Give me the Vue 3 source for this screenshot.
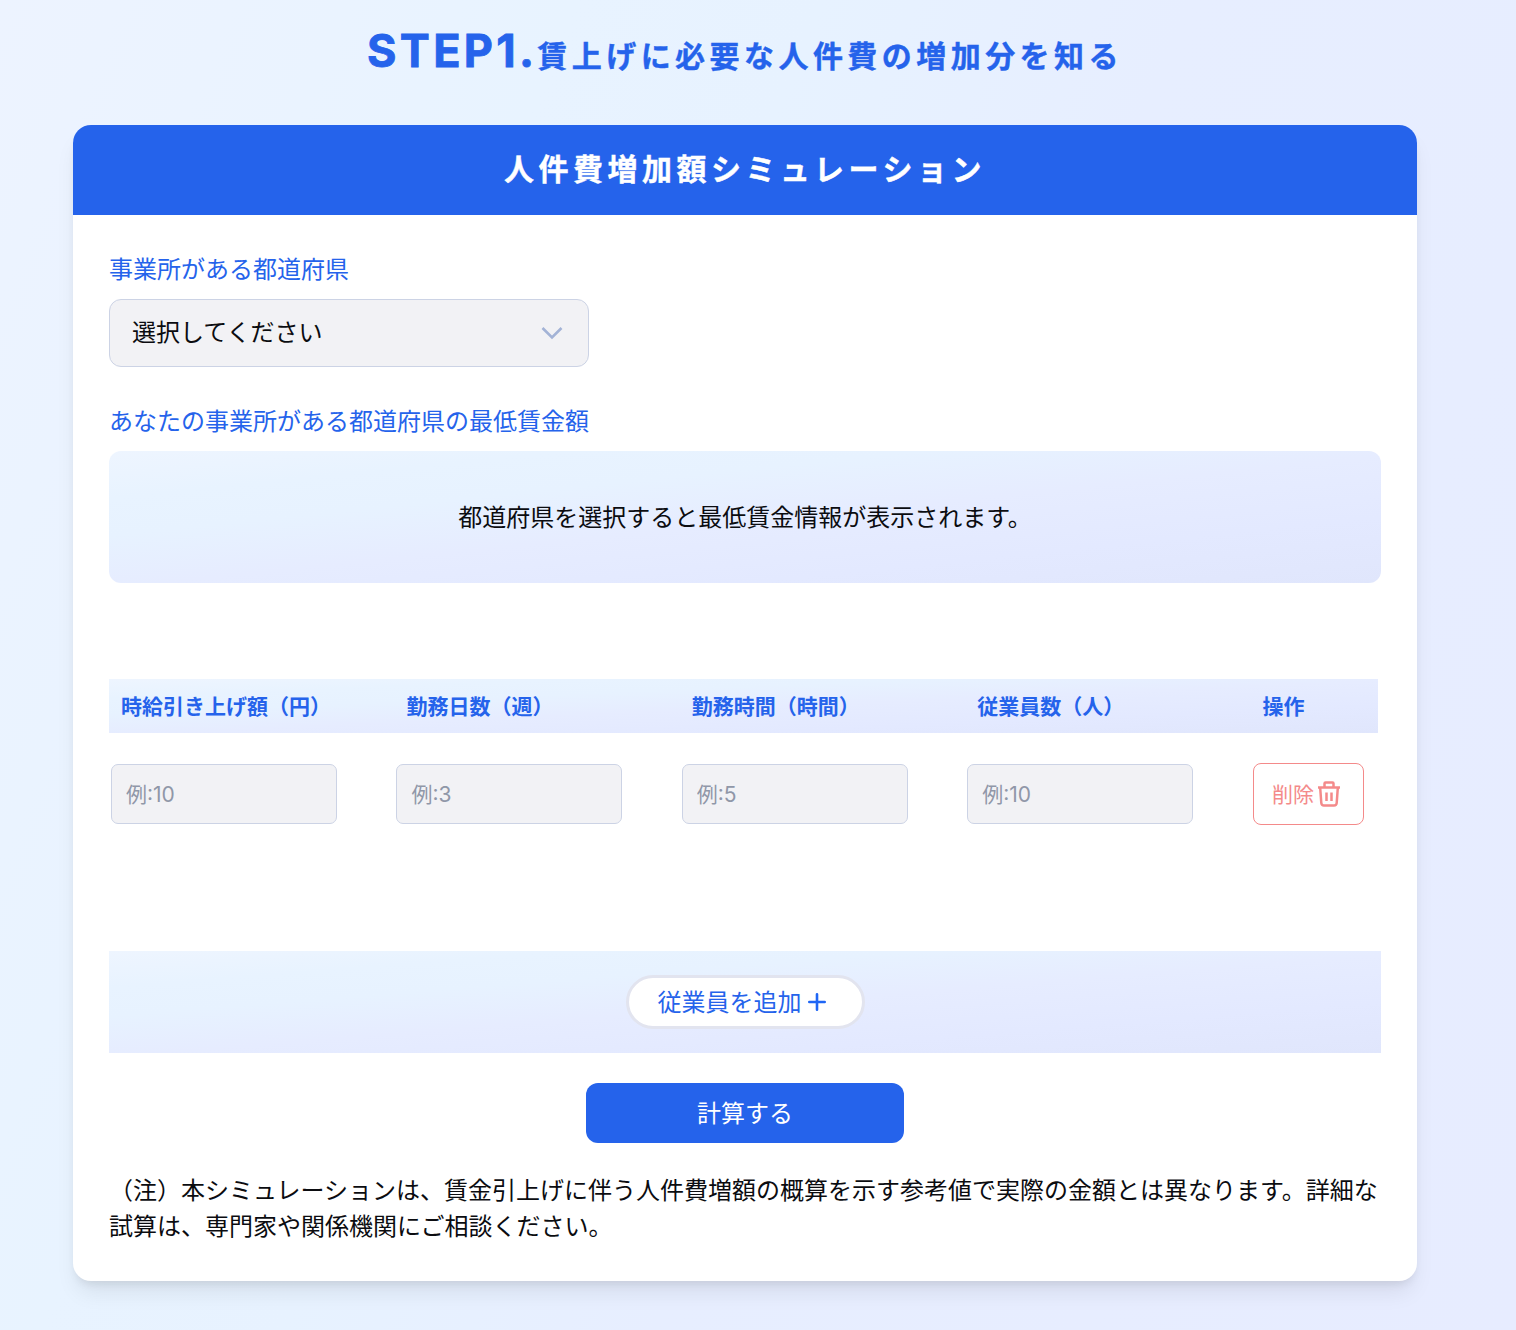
<script setup>
import { ref } from "vue";

const prefecture = ref("");

// 従業員入力の列
const columns = [
  { key: "raise", label: "時給引き上げ額（円）", placeholder: "例:10" },
  { key: "days", label: "勤務日数（週）", placeholder: "例:3" },
  { key: "hours", label: "勤務時間（時間）", placeholder: "例:5" },
  { key: "members", label: "従業員数（人）", placeholder: "例:10" },
];

let nextId = 1;
const newRow = () => ({ id: nextId++, raise: "", days: "", hours: "", members: "" });
const rows = ref([newRow()]);

const addRow = () => {
  rows.value.push(newRow());
};

const removeRow = (id) => {
  if (rows.value.length > 1) {
    rows.value = rows.value.filter((row) => row.id !== id);
  }
};
</script>

<template>
  <main class="page">
    <h1 class="title"><span class="step">STEP1.</span>賃上げに必要な人件費の増加分を知る</h1>

    <section class="card">
      <h2 class="cardHeader">人件費増加額シミュレーション</h2>

      <div class="cardBody">
        <p class="label">事業所がある都道府県</p>
        <div class="selectBox">
          <span>{{ prefecture || "選択してください" }}</span>
          <svg width="24" height="24" viewBox="0 0 24 24" fill="none" stroke="#a3b3d6" stroke-width="2.6">
            <path d="M2.5 7 L12 16.5 L21.5 7" />
          </svg>
        </div>

        <p class="label wageLabel">あなたの事業所がある都道府県の最低賃金額</p>
        <div class="wageBox">都道府県を選択すると最低賃金情報が表示されます。</div>

        <div class="table">
          <div class="row tableHead">
            <span v-for="col in columns" :key="col.key">{{ col.label }}</span>
            <span>操作</span>
          </div>
          <div v-for="row in rows" :key="row.id" class="row tableRow">
            <div v-for="col in columns" :key="col.key">
              <input v-model="row[col.key]" type="text" class="textBox" :placeholder="col.placeholder">
            </div>
            <button class="deleteBtn" @click="removeRow(row.id)">
              <span>削除</span>
              <svg width="24" height="26" viewBox="0 0 24 26" fill="none" stroke="#f48a8a" stroke-width="2.5" stroke-linejoin="round">
                <path d="M1 6.5 H23" />
                <path d="M7.5 6 V2.5 Q7.5 1.5 8.5 1.5 H15.5 Q16.5 1.5 16.5 2.5 V6" />
                <path d="M3.2 7 L4.3 22 Q4.5 24.5 7 24.5 H17 Q19.5 24.5 19.7 22 L20.8 7" />
                <path d="M9.5 11.5 V20 M14.5 11.5 V20" />
              </svg>
            </button>
          </div>
        </div>

        <div class="addArea">
          <button class="addBtn" @click="addRow">
            <span>従業員を追加</span>
            <svg width="18" height="18" viewBox="0 0 18 18" stroke="#1f66f5" stroke-width="2.6" stroke-linecap="round">
              <path d="M1.3 9 H16.7 M9 1.3 V16.7" />
            </svg>
          </button>
        </div>

        <button class="calcBtn">計算する</button>

        <p class="note">（注）本シミュレーションは、賃金引上げに伴う人件費増額の概算を示す参考値で実際の金額とは異なります。詳細な試算は、専門家や関係機関にご相談ください。</p>
      </div>
    </section>
  </main>
</template>

<style>
body {
  margin: 0;
}
</style>

<style scoped>
* {
  box-sizing: border-box;
}

.page {
  height: 1330px;
  padding: 20px 99px 0 73px;
  overflow: hidden;
  background: linear-gradient(112deg, #edf3ff 0%, #e8f3ff 28%, #e7f2ff 40%, #e7eeff 58%, #e7ecff 100%);
  font-family: Inter, "Noto Sans CJK JP", sans-serif;
  font-size: 24px;
  line-height: 36px;
  color: #0b0c10;
}

.title {
  margin: 0;
  height: 105px;
  line-height: 62px;
  font-size: 30px;
  font-weight: 700;
  letter-spacing: 4.45px;
  text-align: center;
  color: #2563eb;
  -webkit-text-stroke: 0.4px;
}

.step {
  font-size: 45px;
  letter-spacing: 3.3px;
  -webkit-text-stroke: 0.8px;
}

.card {
  height: 1156px;
  border-radius: 18px;
  background: #fff;
  overflow: hidden;
  box-shadow: 0 15px 22px -4px rgba(0, 0, 0, 0.08), 0 6px 9px -3px rgba(0, 0, 0, 0.08);
}

.cardHeader {
  margin: 0;
  height: 90px;
  line-height: 88px;
  background: #2563eb;
  color: #fff;
  font-size: 30px;
  font-weight: 700;
  letter-spacing: 4.5px;
  text-align: center;
  -webkit-text-stroke: 0.4px;
}

.cardBody {
  padding: 37px 36px 36px;
}

.label {
  margin: 0 0 11px;
  color: #2563eb;
}

.selectBox {
  display: flex;
  align-items: center;
  justify-content: space-between;
  width: 480px;
  height: 68px;
  padding: 0 24px 0 22px;
  border: 1px solid #ccd3e5;
  border-radius: 12px;
  background: #f2f2f5;
}

.wageLabel {
  margin-top: 37px;
}

.wageBox {
  display: flex;
  align-items: center;
  justify-content: center;
  height: 132px;
  padding-top: 2px;
  border-radius: 12px;
  background: linear-gradient(to bottom right, #eef5ff, #e8f3ff 18%, #e7f2ff 32%, #e6ecff 52%, #e3e9ff 75%, #e0e6fc);
}

.table {
  width: 1269px;
  height: 272px;
  margin-top: 96px;
}

.row {
  display: grid;
  grid-template-columns: repeat(4, 285.4px) 1fr;
}

.tableHead {
  height: 54px;
  padding-left: 12px;
  line-height: 55px;
  font-size: 21px;
  font-weight: 700;
  color: #2563eb;
  background: linear-gradient(to bottom right, #eef5ff, #e8f3ff 18%, #e7f2ff 32%, #e6ecff 52%, #e3e9ff 75%, #e0e6fc);
}

.tableRow {
  align-items: center;
  margin-top: 30px;
  padding-left: 2px;
}

.textBox {
  display: block;
  width: 226px;
  height: 60px;
  padding: 0 14px;
  border: 1px solid #ccd3e5;
  border-radius: 7px;
  background: #f2f2f5;
  font-family: inherit;
  font-size: 21px;
}

.textBox::placeholder {
  color: #9097a8;
}

.deleteBtn {
  display: flex;
  align-items: center;
  justify-content: center;
  gap: 3px;
  width: 111px;
  height: 62px;
  padding: 0 3px 0 0;
  border: 1px solid #f48a8a;
  border-radius: 8px;
  background: #fff;
  color: #f48a8a;
  font-family: inherit;
  font-size: 21px;
  cursor: pointer;
}

.deleteBtn span {
  padding-bottom: 2px;
}

.addArea {
  display: flex;
  align-items: center;
  justify-content: center;
  height: 102px;
  background: linear-gradient(to bottom right, #eef5ff, #e8f3ff 18%, #e7f2ff 32%, #e6ecff 52%, #e3e9ff 75%, #e0e6fc);
}

.addBtn {
  display: flex;
  align-items: center;
  justify-content: center;
  gap: 6px;
  width: 239px;
  height: 54px;
  padding: 0 7px 0 0;
  border: 3px solid #e2e4ef;
  border-radius: 27px;
  background: #fff;
  color: #2563eb;
  font-family: inherit;
  font-size: 24px;
  cursor: pointer;
}

.addBtn span {
  padding-bottom: 4px;
}

.calcBtn {
  display: block;
  width: 318px;
  height: 60px;
  margin: 30px auto;
  padding: 0 0 4px;
  border: none;
  border-radius: 12px;
  background: #2563eb;
  color: #fff;
  font-family: inherit;
  font-size: 24px;
  cursor: pointer;
}

.note {
  margin: 0;
}
</style>
